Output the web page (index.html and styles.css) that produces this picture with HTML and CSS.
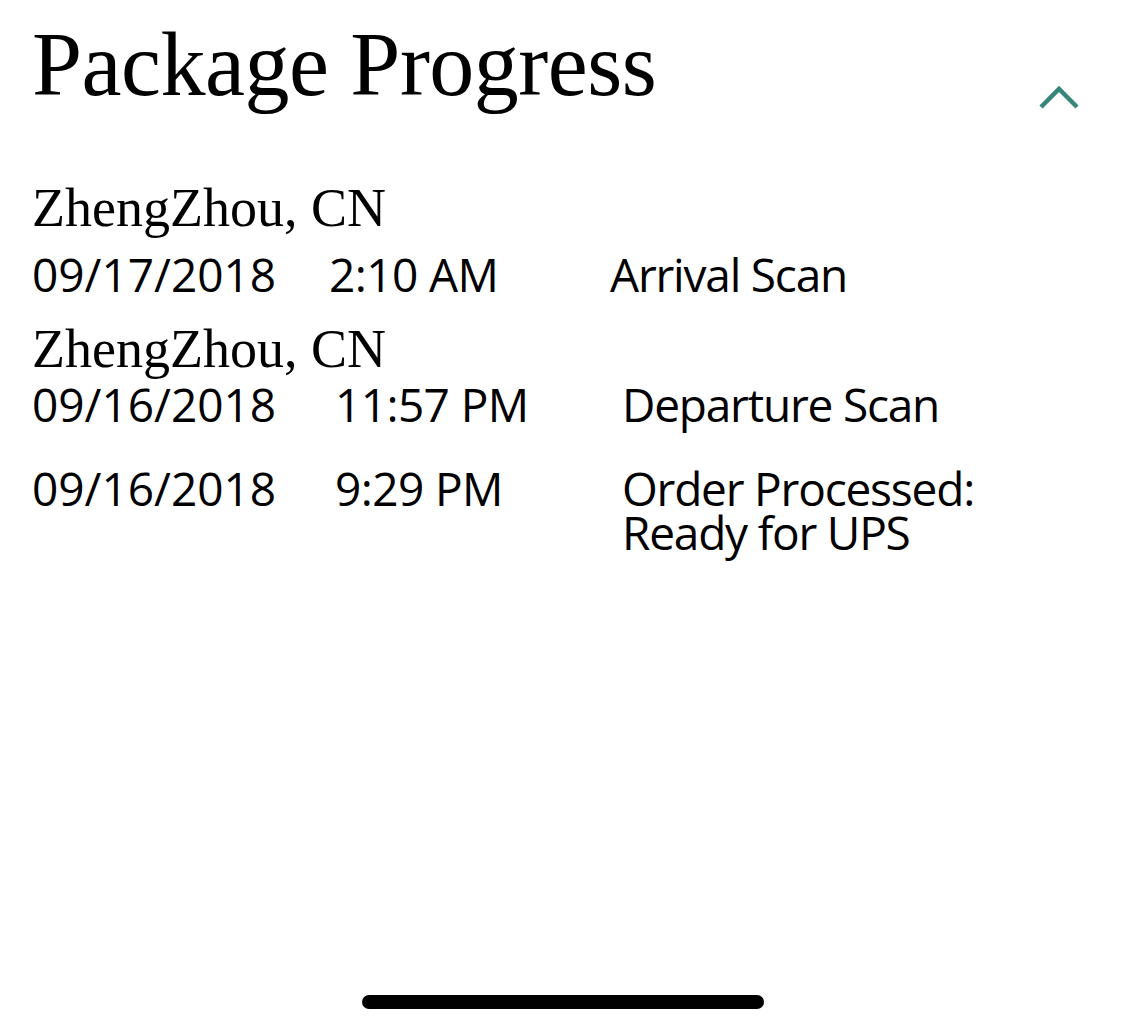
FILE: index.html
```html
<!DOCTYPE html>
<html>
<head>
    <link rel="stylesheet" href="styles.css">
</head>
<body>
  <div class="page">
    <div class="progress-header">
      <h1>Package Progress</h1>
      <button class="toggle" aria-label="Collapse">
        <svg width="40" height="24" viewBox="0 0 40 24">
          <polyline points="2,22 20,4 38,22" fill="none" stroke="#368679" stroke-width="4.5"/>
        </svg>
      </button>
    </div>

    <div class="stop stop-first">
      <div class="city">ZhengZhou, CN</div>
      <div class="scan">
        <span>09/17/2018</span>
        <span class="time">2:10 AM</span>
        <span class="desc">Arrival Scan</span>
      </div>
    </div>

    <div class="stop">
      <div class="city">ZhengZhou, CN</div>
      <div class="scan">
        <span>09/16/2018</span>
        <span class="time">11:57 PM</span>
        <span class="desc">Departure Scan</span>
      </div>
      <div class="scan">
        <span>09/16/2018</span>
        <span class="time">9:29 PM</span>
        <span class="desc">Order Processed: Ready for UPS</span>
      </div>
    </div>
  </div>

  <div class="home-bar"></div>
</body>
</html>
```

FILE: styles.css
```css
body {
    margin: 0;
    background: #fff;
    color: #000;
    font-family: "Open Sans", sans-serif;
    height: 1034px;
    position: relative;
}
.page {
    padding: 20px 32px 0 32px;
}
.progress-header {
    display: flex;
    justify-content: space-between;
    align-items: flex-start;
}
h1 {
    margin: 0;
    font-family: "Liberation Serif", serif;
    font-weight: normal;
    font-size: 90px;
    line-height: 90px;
    letter-spacing: -0.5px;
}
.toggle {
    margin: 65px 14px 0 0;
    padding: 0;
    border: none;
    background: none;
    display: flex;
}
.stop {
    margin-top: 26px;
}
.stop-first {
    margin-top: 71px;
}
.city {
    font-family: "Liberation Serif", serif;
    font-size: 54px;
    line-height: 54px;
}
.scan {
    display: grid;
    grid-template-columns: 303px 287px 400px;
    font-size: 46px;
    line-height: 44px;
    margin-top: 6px;
}
.scan .time {
    letter-spacing: -0.6px;
}
.scan .desc {
    letter-spacing: -1.2px;
}
.scan + .scan {
    margin-top: 40px;
}
.stop-first .scan {
    margin-top: 17px;
    grid-template-columns: 297px 281px 400px;
}
.home-bar {
    position: absolute;
    left: 362px;
    top: 995px;
    width: 402px;
    height: 14px;
    border-radius: 7px;
    background: #000;
}
```
